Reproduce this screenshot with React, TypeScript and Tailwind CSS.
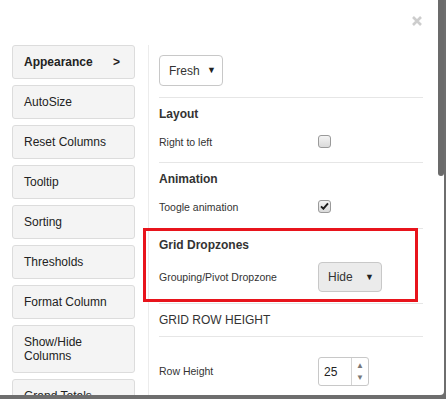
import React from "react";

const navItems = [
  "AutoSize",
  "Reset Columns",
  "Tooltip",
  "Sorting",
  "Thresholds",
  "Format Column",
  "Show/Hide Columns",
  "Grand Totals",
];

function CheckBox({ checked }: { checked?: boolean }) {
  return (
    <span className="flex h-[13px] w-[13px] items-center justify-center rounded-[3px] border border-[#9a9a9a] bg-linear-to-b from-[#f4f4f4] to-[#dadada]">
      {checked && (
        <svg width="9" height="8" viewBox="0 0 9 8">
          <path d="M1 4.3 L3.4 6.7 L8 1.3" fill="none" stroke="#1e1e1e" strokeWidth="1.9" />
        </svg>
      )}
    </span>
  );
}

function Caret() {
  return <span className="text-[9px] leading-none text-[#222]">▼</span>;
}

export default function App() {
  return (
    <div className="relative h-[399px] w-[446px] overflow-hidden bg-[#6e6e6e] font-['Liberation_Sans',Arial,sans-serif] text-[#333]">
      <div className="flex h-[395px] w-[444px] flex-col overflow-hidden rounded-br-[4px] bg-white">
        {/* close */}
        <div className="flex h-[45px] shrink-0 justify-end pr-[22px] pt-[16px]">
          <svg width="10" height="10" viewBox="0 0 10 10">
            <path d="M1 1 L9 9 M9 1 L1 9" stroke="#cdcdcd" strokeWidth="2.6" />
          </svg>
        </div>

        <div className="flex min-h-0 flex-1">
          {/* left nav */}
          <div className="flex w-[136px] shrink-0 flex-col gap-[6px] pl-[12px]">
            <div className="flex w-[123px] items-center justify-between rounded-[3px] border border-[#dcdcdc] bg-[#f4f4f4] py-[9px] pl-[11px] pr-[14px] text-[12px] font-bold leading-[14px] text-[#222]">
              <span>Appearance</span>
              <span>&gt;</span>
            </div>
            {navItems.map((item) => (
              <div
                key={item}
                className="w-[123px] shrink-0 rounded-[3px] border border-[#dcdcdc] bg-[#f4f4f4] py-[9px] pl-[11px] pr-[10px] text-[12px] leading-[14px] text-[#222]"
              >
                {item}
              </div>
            ))}
          </div>

          {/* right panel */}
          <div className="ml-[12px] w-[275px] border-l border-[#ececec] pl-[10px]">
            <div className="pt-[10px] pb-[11px]">
              <div className="flex h-[31px] w-[64px] items-center justify-between rounded-[4px] border border-[#c8c8c8] bg-white pl-[9px] pr-[6px] text-[12px] text-[#333]">
                <span>Fresh</span>
                <Caret />
              </div>
            </div>

            <div className="w-[264px] border-t border-[#e6e6e6] pb-[10px]">
              <div className="flex h-[32px] items-center text-[12px] font-bold">Layout</div>
              <div className="flex h-[22px] items-center">
                <span className="w-[159px] pt-[3px] text-[10.5px]">Right to left</span>
                <CheckBox />
              </div>
            </div>

            <div className="w-[264px] border-t border-[#e6e6e6] pb-[11px]">
              <div className="flex h-[32px] items-center text-[12px] font-bold">Animation</div>
              <div className="flex h-[22px] items-center">
                <span className="w-[159px] pt-[4px] text-[10.5px]">Toogle animation</span>
                <CheckBox checked />
              </div>
            </div>

            <div className="relative w-[264px] border-t border-[#e6e6e6] pb-[10px]">
              <div className="flex h-[32px] items-center text-[12px] font-bold">Grid Dropzones</div>
              <div className="flex h-[32px] items-center">
                <span className="w-[159px] pt-[1px] text-[10.5px]">Grouping/Pivot Dropzone</span>
                <div className="flex h-[30px] w-[64px] items-center justify-between rounded-[4px] border border-[#c8c8c8] bg-[#ebebeb] pl-[9px] pr-[7px] text-[12px] text-[#333]">
                  <span>Hide</span>
                  <Caret />
                </div>
              </div>
              <div className="absolute -left-[16px] -top-[1px] bottom-[1px] right-[5px] border-[3px] border-[#e8141c]" />
            </div>

            <div className="w-[264px] border-t border-[#e6e6e6]">
              <div className="flex h-[32px] items-center text-[12px] font-medium text-[#333]">GRID ROW HEIGHT</div>
            </div>

            <div className="w-[264px] border-t border-[#e6e6e6] pt-[20px]">
              <div className="flex h-[29px] items-center">
                <span className="w-[159px] text-[10.5px]">Row Height</span>
                <div className="flex h-[29px] w-[51px] items-stretch rounded-[3px] border border-[#c8c8c8] bg-white">
                  <span className="flex flex-1 items-center pl-[5px] text-[12px] text-[#222]">25</span>
                  <span className="flex w-[17px] flex-col items-center justify-center gap-[4px] border-l border-[#d4d4d4] text-[8px] leading-none text-[#777]">
                    <span>▲</span>
                    <span>▼</span>
                  </span>
                </div>
              </div>
            </div>
          </div>
        </div>
      </div>

      {/* page scrollbar thumb */}
      <div className="absolute left-[438px] top-0 h-[176px] w-[6px] rounded-b-[3px] bg-[#6b6b6b]" />
    </div>
  );
}
